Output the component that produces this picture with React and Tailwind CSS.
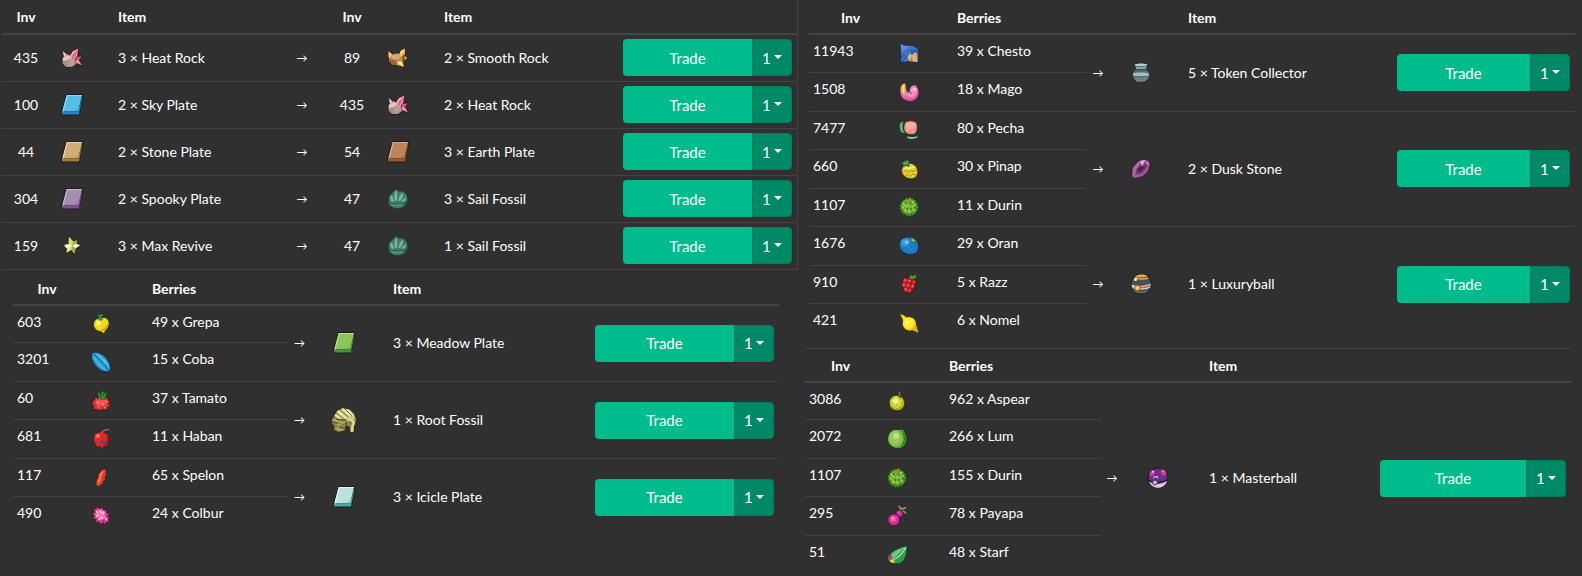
import clsx from 'clsx';

// Points of a spiky round fruit, centred in the 30x30 sprite box
const burr = (count, outer, inner) =>
    Array.from({ length: count * 2 }, (_, i) => {
        const r = i % 2 ? inner : outer;
        const a = (i * Math.PI) / count;
        return `${(15 + r * Math.cos(a)).toFixed(1)},${(15 + r * Math.sin(a)).toFixed(1)}`;
    }).join(' ');

const Plate = ({ face, light, edge }) => (
    <>
        <path d="M9 4H26V8L22.5 25.5H4V21Z" fill="#1d1d1d" />
        <path d="M9.7 5H25L21.2 21.5H5.3Z" fill={face} />
        <path d="M5.3 21.5L9.7 5H25L24.8 6H10.6L6.6 21.5Z" fill={light} />
        <path d="M5 22H21.2L25 6V9L22 24.6H5Z" fill={edge} />
        <path d="M17.5 20.5L20.5 18.5L20 20.5Z" fill={edge} opacity="0.6" />
    </>
);

const SPRITES = {
    heatRock: (
        <g strokeLinejoin="round">
            <path d="M6 7L12 12L17 7L21.5 5V12L25 13L23 17L25.5 22.5L20 22L16 24.5H9L5 21V14L7 12Z" fill="#3a2c2c" stroke="#252222" />
            <path d="M5.5 15L10 11L18 14L19 21L15 24H9L5.5 20.5Z" fill="#a88d84" />
            <path d="M6 15L10 12L15 14L11 17L6 18Z" fill="#dccbbe" />
            <path d="M11 18L17 15L18 20L15 23H11Z" fill="#b7a093" />
            <path d="M6 8L11 12.5L7 14Z" fill="#ee7a9c" />
            <path d="M6 8L9 12L7 14Z" fill="#f6c7d1" />
            <path d="M21.3 5.5L15.5 8.5L12.5 14L15 17L20 13Z" fill="#f5b3c1" />
            <path d="M21.3 5.5L19 12L15 17L14.5 13Z" fill="#e0648b" />
            <path d="M19 14L24.5 13.5L22 17L25 22L18.5 20Z" fill="#db527f" />
            <path d="M20 17L24.5 22L19 19Z" fill="#f7b5c5" />
        </g>
    ),
    smoothRock: (
        <g strokeLinejoin="round">
            <path d="M5.5 7.5L10 10.5L16 9L20 5.5L22.5 5V12L25 15L21.5 18L21.5 24.5L15 23L9 22.5L5.5 18.5Z" fill="#6b4832" stroke="#252220" />
            <path d="M6 14L11 10.5L19 11L20 17L15 22H10L6 18Z" fill="#b07a56" />
            <path d="M9 12L15 11L18 14L14 17L8 16Z" fill="#d6a486" />
            <path d="M7 16L14 18L14 22H10L6.5 18.5Z" fill="#946446" />
            <path d="M15 17L19 15L18 20L15 21Z" fill="#c28b6a" />
            <path d="M5.5 8L9 11.5L6.5 15.5L5.5 14Z" fill="#f5d65c" />
            <path d="M22 5.5L18 7.5L16 12L18.5 14L22 10.5Z" fill="#f2bd30" />
            <path d="M21.5 6L17.5 9L17 12Z" fill="#fff3b5" />
            <path d="M21.5 13L24.5 15L21.5 17Z" fill="#eab022" />
            <path d="M13.5 18.5L19 17.5L21 24L14.5 22Z" fill="#f0b829" />
            <path d="M14 19L18 19L20.5 23.5Z" fill="#fff3b5" />
        </g>
    ),
    skyPlate: <Plate face="#56bfe9" light="#8bdcf7" edge="#1f86c4" />,
    stonePlate: <Plate face="#d0ae73" light="#ecd6a4" edge="#a67b3e" />,
    spookyPlate: <Plate face="#a48db0" light="#cbb9d4" edge="#8a4c98" />,
    earthPlate: <Plate face="#bd8558" light="#dcae83" edge="#a2592b" />,
    meadowPlate: <Plate face="#8bc45c" light="#b9e58c" edge="#3f9a38" />,
    iciclePlate: <Plate face="#bbe2df" light="#e4f7f4" edge="#35b3a6" />,
    maxRevive: (
        <g strokeLinejoin="round">
            <path d="M12 5L16.5 10L20 8.5L19.5 12.5L23.5 14.5L19 17.5L17.5 24L14 19.5L9 22.5L9.5 17.5L6.5 14L11.5 12.5Z" fill="#c5c85c" stroke="#23231a" strokeWidth="1.2" />
            <path d="M12 5.5L16 10.5L15 15L11.5 12.5Z" fill="#dbe070" />
            <path d="M7 14L11.5 13L15 15L9.5 17.5Z" fill="#fffff0" />
            <path d="M15 15L19.5 12.5L23 14.5L19 17Z" fill="#fffff0" />
            <path d="M15 15L14 19L9.5 22L10 17.5Z" fill="#e3e68e" />
            <path d="M15 15L19 17L17.5 23L14.5 19Z" fill="#a3a743" />
            <path d="M16 11L20 9L19.5 12.5L15 15Z" fill="#b0b44a" />
        </g>
    ),
    sailFossil: (
        <g strokeLinejoin="round" strokeLinecap="round">
            <path d="M13 5L15.5 7L20 7L24 11L25 16L22 22L16 24.8L10 24L5.5 19.5L5.5 13L9 9Z" fill="#417d6b" stroke="#213a35" strokeWidth="0.9" />
            <path d="M20 22L24.5 15L25 18L22 22.5L17 24.5Z" fill="#2a4c55" />
            <path d="M9 18C7 16 7 13 8.5 11C10 13 10.5 15 10.5 18ZM11.5 17C11 13 11.5 9 13.5 6C14.5 9 14.5 13 13.5 17ZM15.5 17C15.5 13 17 10.5 20 9C20 13 19 15 17 17ZM18.5 17.5C19.5 15.5 21 14 23 13.5C23 15.5 22.5 16.5 21 18Z" fill="#6fae96" />
            <path d="M8.5 13L9.5 17M13 9V16M19.5 10.5L16.5 16" stroke="#95c8ae" strokeWidth="0.7" fill="none" />
            <path d="M6.5 18.5C10 20 18 20 23 18" stroke="#2d5f51" strokeWidth="0.9" fill="none" />
            <path d="M8 21.5H13M15 21.5H20" stroke="#5a9c86" strokeWidth="1.2" />
        </g>
    ),
    grepa: (
        <g>
            <path d="M15.5 9C20 7 24 11 23 16C22.5 19 20 21 19 22.5L18.5 25L14.5 22.5C10 22 7.3 19 7.5 15C7.8 11 11 8.5 15.5 9Z" fill="#f2d81f" stroke="#2c2810" strokeWidth="0.8" />
            <path d="M22.5 13C22.5 17 20.5 20.5 18.5 22L13 21.5C17.5 20.5 21 17.5 22.5 13Z" fill="#cdaa10" />
            <circle cx="12.5" cy="14" r="2.5" fill="#fff07a" />
            <path d="M12.5 5.5L14 8L16.5 5.5M12 10L14 10.5L17 10M14.5 7.5V12" stroke="#35953c" strokeWidth="1.7" fill="none" />
        </g>
    ),
    coba: (
        <g transform="rotate(47 15 15)">
            <path d="M2.5 15C5 6.5 25 6.5 27.5 15C25 23.5 5 23.5 2.5 15Z" fill="#2ba3d8" stroke="#12303f" strokeWidth="0.9" />
            <path d="M5 14C9 10 21 10 25 14C20 12.8 10 12.8 5 14Z" fill="#5fc2ea" />
            <path d="M4 15C10 14 20 14 26 15" stroke="#14709f" strokeWidth="1.2" fill="none" />
            <path d="M7 17C11 18.5 19 18.5 23 17" stroke="#5bbde6" strokeWidth="1" fill="none" />
            <path d="M8 19.5C12 21 18 21 22 19.5" stroke="#1b7db0" strokeWidth="1" fill="none" />
        </g>
    ),
    tamato: (
        <g>
            <path d="M6.5 14.5L8.5 14L8 11L11.5 12C14 10.5 17 10.5 19.5 11.5L22 10.5L22 14L24.5 15L23 17.5L24.3 21L21.5 21.5L20.5 24.5L17 23.5L13 24.8L10.5 23.5L7 23.5L7.5 20L6 18Z" fill="#d93337" stroke="#351414" strokeWidth="0.8" />
            <path d="M10 14C13 12.5 19 12.5 21 15C21.5 18 19 20.5 15 20.5C11 20.5 8.5 17.5 10 14Z" fill="#ee5350" />
            <path d="M11 16.5h1.5M16 18h1.5M19.5 15.5h1M12 21h1M18.5 21.5h1" stroke="#ffb1a2" strokeWidth="1.3" />
            <path d="M12.5 6.5L14.5 13M16.5 5.5V14M20 6.5L17.5 13" stroke="#1d5d24" strokeWidth="2.6" fill="none" />
            <path d="M12.5 7L14.5 12.5M16.5 6V13.5M19.8 7L17.5 12.5" stroke="#379a3e" strokeWidth="1.3" fill="none" />
        </g>
    ),
    haban: (
        <g>
            <path d="M11.5 8.5C14 7.5 18 7.5 20.5 9.5C23.5 12 23.5 17 22 19.5L20.5 23L18 22.5L16.5 25L14 22.8L10.5 23L9.5 20.5C6.5 17.5 6.5 11 11.5 8.5Z" fill="#d92a2b" stroke="#331212" strokeWidth="0.8" />
            <path d="M21 11C23 14 22 19 19 21.5L16 22.5C19 19.5 21 16 21 11Z" fill="#ae1d24" />
            <ellipse cx="11.8" cy="12" rx="2.6" ry="2.2" fill="#f46a5c" />
            <path d="M15.5 9C17 6.5 19.5 5.5 23 5.5" stroke="#cf7a6c" strokeWidth="1.2" fill="none" />
            <path d="M13.5 18.5L16.5 16L19.5 18L17 20Z" fill="#55468f" />
        </g>
    ),
    spelon: (
        <g>
            <path d="M16 6L19.5 6L20.8 8L20 10L20.6 12.5L19 14L19.5 17L17.5 18L17 21.5L14.5 22L13.5 24.5L11.5 23L9.5 22L10.3 19L9.8 16.5L11.8 15.5L12 12L12 10L14 9.5Z" fill="#e0462f" stroke="#341410" strokeWidth="0.8" />
            <path d="M16.5 8.5C14.8 11 14 15 12.5 20" stroke="#fb7d58" strokeWidth="1.8" fill="none" />
            <path d="M18.5 10C18 14 17 17 15 21" stroke="#c4341f" strokeWidth="1" fill="none" />
        </g>
    ),
    colbur: (
        <g>
            <path d="M6.5 7.5L10 8L11 5.5L13.5 7.5L17 6L17.5 9L21 8.5L20.5 11.5L23.5 13L21.5 15L24 17.5L22 18.5L24.3 21.5L20.5 21L19.5 24L17 21.5L14.5 23.5L13 21L9.5 21.5L10 18.5L6.5 17.5L8.5 15L5.8 12.5L9 11Z" fill="#d8408f" stroke="#3a1129" strokeWidth="0.8" />
            <ellipse cx="14.5" cy="14" rx="5" ry="5" fill="#ee78b5" />
            <path d="M10 10l2 2M14 9l1 3M18 11l-2 2M10 15l3-1M15 16l2 2M19 17l2 2M13 19l1-2" stroke="#ffd3ea" strokeWidth="1.2" />
            <path d="M19 14l2 0M17 19l1 2M11 18l1-1" stroke="#b02878" strokeWidth="1.1" />
        </g>
    ),
    rootFossil: (
        <g strokeLinecap="round" strokeLinejoin="round">
            <path d="M5 10L8 5L14 2.5L21 4L25.5 9L28 14L27 18L25.5 21L25.5 27L21 28L20 22L17 21L16 26L9 27.5L4 25L5 21L2 18L3 14Z" fill="#8b8449" stroke="#28250f" />
            <path d="M6 11L9 6L14 3.5L21 5L25 10L26 14L19 15L8 13Z" fill="#cfc883" />
            <path d="M9 6.5L17 12.5M13.5 4L21 10.5M18 4.5L24 10M6.5 10L12 13.5" stroke="#efeab2" strokeWidth="1.6" />
            <path d="M7.5 8.5L14 13.5M11 5L19 12M16 4L22.5 10.5" stroke="#57511f" strokeWidth="0.8" />
            <path d="M4 15L9 16L14 18L18 16M6 18L11 20L8 24L13 25" stroke="#b0a862" strokeWidth="1.8" fill="none" />
            <path d="M19 14.5C24 14.5 26 17 23.5 21L23 26" stroke="#ded795" strokeWidth="2.6" fill="none" />
            <path d="M3.5 17L8 18.5M10 22L14 23M17 17V20M8 14.5L17 15" stroke="#4c4720" strokeWidth="1.2" />
        </g>
    ),
    chesto: (
        <g strokeLinejoin="round">
            <path d="M6 5L10 7L19 7.5L24.3 11L24 24.8L15 23.5L7 24.8L6.5 17Z" fill="#4176c4" stroke="#18233a" strokeWidth="0.8" />
            <path d="M6.8 6L10 8L16 8L8 14Z" fill="#5f8fd8" />
            <path d="M7 17.5C11 17 14 14.5 16 12L24 11.5L23 14C18 14.5 13 18 9 23.5L7.5 24Z" fill="#2b5aa5" />
            <path d="M7.5 22C10 18 13 15.5 17 14" stroke="#6b9ae0" strokeWidth="1" fill="none" />
            <path d="M13.5 18L16.5 15.5L18 17.5L21 14.5L23.5 16V24L15 23Z" fill="#dcb67c" />
            <path d="M18 17.5L18.5 23.5L16 23ZM22 15.5L23.5 16V24Z" fill="#b0844c" />
        </g>
    ),
    mago: (
        <g>
            <path d="M7 9C7.5 7 9 6 11.5 6L13 12L18 8L21 8L22 6L22.5 9C25.5 12 25.5 17 23.5 20.5C21 24.5 16 25.5 11.5 23.5C6 21 4.5 14 7 9Z" fill="#e36bac" stroke="#391428" strokeWidth="0.8" />
            <path d="M15.5 15.5C14.5 11 17 8.5 20 9C24 10.5 24 16 21 19C17 21.5 13 19.5 11 16.5Z" fill="#f08fc2" />
            <path d="M7 9.5C8 7.5 9.5 6.5 11.2 6.5L11.5 13L11 18.5C7.5 17.5 6 13 7 9.5Z" fill="#dcbf4c" />
            <path d="M9.5 8L9.5 15" stroke="#fbe9a0" strokeWidth="1.1" />
            <path d="M12 6C11.8 12 12 15 15.5 15.5C16 11.5 16.5 9.5 19 8L16 7.5Z" fill="#303030" />
            <path d="M15.5 15.5C16 16.5 17 16.5 18 16" stroke="#8f2c66" strokeWidth="1" fill="none" />
            <ellipse cx="20.5" cy="12.5" rx="1.7" ry="1.4" fill="#fbc9e2" />
            <path d="M11 22C16 24.5 21 23 23.5 18" stroke="#c54a90" strokeWidth="1.3" fill="none" />
        </g>
    ),
    pecha: (
        <g>
            <path d="M6 7L10.5 6C8.5 10 9 15 11.5 19L8 18.5C4.5 15.5 4.5 10 6 7Z" fill="#3b9a5b" stroke="#17321f" strokeWidth="0.8" />
            <path d="M7.5 8C6.5 11 7 14 8.5 17" stroke="#8fd3a0" fill="none" />
            <path d="M13 20.5C17 22.5 22 21.5 25 20.5C23.5 24.5 16 25.5 12.5 23Z" fill="#57b374" stroke="#17321f" strokeWidth="0.8" />
            <path d="M14.5 22.5C17 23.5 20.5 23 23 22" stroke="#b5e3bb" fill="none" />
            <path d="M12 6.5C15 5.5 20 5.5 22.5 7.5C24 11 23.5 15 22 18C19 20.5 13.5 20 11 17C9 14 9.5 9 12 6.5Z" fill="#ef8f87" stroke="#3f2020" strokeWidth="0.8" />
            <path d="M12.5 8C15 7 19 7 21.5 8.5L21.5 13C18 15 14 15 11.5 13Z" fill="#f6aba0" />
            <path d="M13.5 10.5h1M18.5 10.5h1M16 13h1M13 15.5h1M18.5 16h1" stroke="#ffe6e0" strokeWidth="1.1" />
        </g>
    ),
    pinap: (
        <g>
            <path d="M12 10C16 8 21 10 23 14C25 19 23 24 18 24.8C12 25 7.5 21 7.5 16.5C8 13 9.5 11 12 10Z" fill="#e3cf36" stroke="#332c0e" strokeWidth="0.8" />
            <path d="M9 18L12 16.5L14 18.5L16.5 16L19 18L21 15.5L23 16.5M11 22L13.5 20.5L16 22.5L19 20L22 21" stroke="#ab9314" strokeWidth="1" fill="none" />
            <path d="M10.5 15L13 13.5L15.5 15L18 13L20.5 14" stroke="#fff38b" strokeWidth="1.2" fill="none" />
            <path d="M6 8L10 8L9.5 5.5L12 7L13.5 4.5L14.5 7.5L16.5 8L14.5 10L15 12L11.5 11.5L8 13L9 10.5Z" fill="#3f9148" stroke="#1b3519" strokeWidth="0.8" />
            <path d="M9.5 9L12 10M13 7V9.5" stroke="#85c77c" />
        </g>
    ),
    durin: (
        <g>
            <polygon points={burr(17, 10.4, 8.6)} fill="#4c8f2a" stroke="#1e2a14" strokeWidth="0.7" />
            <circle cx="14.5" cy="14.5" r="7" fill="#6db035" />
            <path d="M9 11l2 2M8 15l2 1M11 17l1 3M15 18l0 3M19 17l2 2M20 13l2 0M18 11l2-2M14.5 13l1 2M11 13.5l2 1M18 14l1 1" stroke="#b6de62" strokeWidth="1.1" />
            <path d="M11 10l1 2M22 15l-2 1M9 18l-1 1M13 16l0 2M17 16l0 2M16 12l1-2M13 21l-1 2M17 22l1 1" stroke="#346d1e" strokeWidth="1.1" />
            <path d="M15 6.5L17.5 5.5L16.5 10.5L15 9.5Z" fill="#c97b3c" />
        </g>
    ),
    oran: (
        <g>
            <path d="M8.5 7.5C12 5 19 5.5 22.5 9.5C26 14 25 20 21 22.5C16 25 9 22.5 6.5 18C4.5 14 5 10 8.5 7.5Z" fill="#1f80ca" stroke="#10243a" strokeWidth="0.8" />
            <path d="M7.5 10C9 7.5 14 7 16 9C16.5 12 14 14.5 11 15C8.5 15 6.5 12.5 7.5 10Z" fill="#3f99da" />
            <circle cx="12.5" cy="11.2" r="1.8" fill="#7cc2ee" />
            <path d="M15.5 6.5L19 7L22.5 9.5L21.5 12L18.5 11.5L16.5 9.5Z" fill="#4ea24a" stroke="#18405e" strokeWidth="0.6" />
            <path d="M18 8.5l2 1.5" stroke="#bde5a8" />
            <path d="M9 17.5h1M13 19.5h1M17 16h1M20 19h1M21.5 15h1M16.5 21.5h1" stroke="#125693" strokeWidth="1.1" />
        </g>
    ),
    razz: (
        <g>
            <path d="M9 8.5L14 8L20 9L22.5 12L21.5 18L18.5 22L14 25L10.5 23L9.5 19.5L7.5 16L8 12Z" fill="#961b22" stroke="#301012" strokeWidth="0.8" />
            <g fill="#df3037">
                <circle cx="11" cy="11.5" r="2" />
                <circle cx="15.5" cy="12" r="2" />
                <circle cx="20" cy="13" r="1.8" />
                <circle cx="9.8" cy="16" r="1.9" />
                <circle cx="14" cy="16.5" r="2" />
                <circle cx="18.5" cy="17.5" r="1.9" />
                <circle cx="11.5" cy="20.5" r="1.9" />
                <circle cx="15.5" cy="21.5" r="1.9" />
            </g>
            <path d="M10.5 11h1M15 11.5h1M9.5 15.5h1M13.5 16h1M18 17h1M11 20h1" stroke="#ffaca0" />
            <path d="M14.5 8.5L17.5 5.5L18.5 7L22.5 5L22 9.5L17.5 10.5Z" fill="#4f9b35" stroke="#1c3315" strokeWidth="0.7" />
        </g>
    ),
    nomel: (
        <g strokeLinejoin="round">
            <path d="M5.5 5.5L10 7L12.5 9C18 7.5 22.5 11 22.5 17L24.8 25L18.5 22.5C13 24 8 20.5 8.2 15L8.5 12Z" fill="#f6d822" stroke="#302a10" strokeWidth="0.8" />
            <path d="M21.5 14C21.5 18.5 19 21.5 14 22.5L19 22L24 24.5L22 17Z" fill="#e3ab1a" />
            <circle cx="14.5" cy="15" r="5" fill="#ffee38" />
            <circle cx="12.8" cy="14.5" r="1.6" fill="#fffbc8" />
        </g>
    ),
    tokenCollector: (
        <g>
            <path d="M8 6.5C11 4.5 19 4.5 22 6.5L20.5 11L23.8 15C24.5 20 20 24.8 15 24.8C10 24.8 5.5 20 6.2 15L9.5 11Z" fill="#557072" stroke="#1d2627" strokeWidth="0.9" />
            <ellipse cx="15" cy="6.8" rx="6.5" ry="1.3" fill="#b9cfcc" />
            <path d="M10 10H20" stroke="#9fb8b6" strokeWidth="1.5" />
            <path d="M9 11.8H21" stroke="#2e4041" />
            <path d="M7 15.5C10 14 20 14 23 15.5L22.5 18H7.5Z" fill="#a9bcbb" />
            <path d="M8 20.5H22M10 22.5H20" stroke="#8097a0" strokeWidth="1.4" strokeDasharray="1.5 1" />
        </g>
    ),
    duskStone: (
        <g strokeLinejoin="round">
            <path d="M12 7L18 5L22.5 6.5L24.3 11L22.5 17L17 22.5L9 24.8L5.7 23L6 14Z" fill="#9a559a" stroke="#211322" strokeWidth="0.9" />
            <path d="M7 14.5L12.5 8L14.5 11L9.5 16L8 23L6.5 22Z" fill="#b06aa9" />
            <path d="M14 10.5L20 9.5L21 13L16 19L10 20.5L10.5 15.5Z" fill="#67375f" />
            <path d="M12 14L17 12L18 14L14 17.5H11.5Z" fill="#4b2549" />
            <path d="M13.5 7L19 6L16.5 12.5Z" fill="#e2a8dc" />
            <path d="M20 6.5L22.5 8L23.5 11.5L21 10Z" fill="#c585bf" />
        </g>
    ),
    luxuryBall: (
        <g>
            <circle cx="15" cy="15" r="10" fill="#4b4e56" stroke="#1c1c1e" />
            <path d="M10 7C13 5.2 18 5 21 7L22.5 10C18 11 13 11 8.5 9.5Z" fill="#e2ab4c" />
            <path d="M11 8.3C14 9 18 9 22 8" stroke="#9c4a30" strokeWidth="1.1" fill="none" />
            <path d="M5.3 15.5C9 17.5 20 17.5 24.8 14.5L24 19C18 21 10 21.5 6.5 19Z" fill="#ded6cc" />
            <path d="M13 18.8C18 19 21.5 18 24.5 16.8" stroke="#d2583a" strokeWidth="1.6" fill="none" />
            <path d="M8 21.5C12 24.5 18 24.5 22 21" stroke="#6d7079" strokeWidth="1.2" fill="none" />
            <circle cx="11.5" cy="19" r="2.9" fill="#e3b03e" stroke="#6b4d18" strokeWidth="0.7" />
            <circle cx="11.5" cy="19" r="1.1" fill="#fff6cf" />
            <circle cx="9.5" cy="10.5" r="1.5" fill="#f2f3f6" />
        </g>
    ),
    aspear: (
        <g>
            <circle cx="15" cy="17" r="7.8" fill="#b9b31d" stroke="#2b2c10" strokeWidth="0.8" />
            <circle cx="14.3" cy="16" r="6" fill="#d5d93c" />
            <circle cx="13.5" cy="15" r="2.8" fill="#f0f291" />
            <path d="M10.5 13h1M17.5 13.5h1M9.5 17.5h1M14 19h1M19 17h1M11.5 20.5h1M17 20.5h1M14.5 22.5h1" stroke="#7fa324" strokeWidth="1.2" />
            <path d="M16.5 5L18.5 5.5L18.5 11.5L17 11.5Z" fill="#a98648" stroke="#33280f" strokeWidth="0.6" />
        </g>
    ),
    lum: (
        <g>
            <path d="M16 5.5L21 5L22.5 8C26 13 25 20 21 23C16 26.5 8.5 24 6 18C4.5 12 8 5.5 16 5.5Z" fill="#4da33a" stroke="#173016" strokeWidth="0.8" />
            <ellipse cx="13.8" cy="14.5" rx="7.5" ry="8.5" fill="#84c14a" />
            <ellipse cx="13" cy="13.5" rx="5.5" ry="6.5" fill="#97cc5b" />
            <ellipse cx="14" cy="12" rx="2.8" ry="3" fill="#bfe093" />
            <path d="M21 9C23.5 13 23 18 19.5 22" stroke="#24752b" strokeWidth="1.1" fill="none" />
        </g>
    ),
    payapa: (
        <g>
            <path d="M17.5 9.5L18.5 7L20.5 8L24 6.5M19.5 9.5L22 10.5L24 12.5M18.5 7L16.5 5" stroke="#7cae67" strokeWidth="1.4" fill="none" />
            <circle cx="17.5" cy="12.5" r="3.8" fill="#c4278a" stroke="#33102a" strokeWidth="0.8" />
            <circle cx="11.8" cy="18.8" r="6" fill="#cf2c8f" stroke="#33102a" strokeWidth="0.8" />
            <circle cx="11.3" cy="18" r="3.2" fill="#e453a6" />
            <circle cx="10.8" cy="17.2" r="1.3" fill="#f7a8d5" />
            <circle cx="17" cy="12" r="1.4" fill="#dd4ea3" />
        </g>
    ),
    starf: (
        <g>
            <path d="M25 5.5C25.5 14 23 22.5 16.5 24L11 23.5L7 22L6 17C8 11 16 8 25 5.5Z" fill="#2f9b4d" stroke="#142c1b" strokeWidth="0.8" />
            <path d="M24 7C16 9 10.5 11.5 8.5 16.5L11 19Z" fill="#72c58a" />
            <path d="M24 7.5C21 13 17 17.5 10.5 20" stroke="#b9eac4" strokeWidth="1.2" fill="none" />
            <path d="M6 16L9 14L10.5 18L8 19.5Z" fill="#c63b37" />
            <path d="M5.5 16L7.5 18.5L6.5 20.5Z" fill="#3975bc" />
            <path d="M7.5 20L12 19.5L12.5 23L9 22.5Z" fill="#e9d057" />
        </g>
    ),
    masterBall: (
        <g>
            <circle cx="15" cy="15" r="10" fill="#6c2d90" stroke="#1c1220" />
            <path d="M6 18.5C11 22 19 21.5 24.3 17.5C22.5 23 18.5 24.8 15 24.8C11 24.8 7.5 22.5 6 18.5Z" fill="#d4cbe2" />
            <path d="M5.3 17C11 21 19 20.5 24.7 16.5" stroke="#231629" strokeWidth="1.4" fill="none" />
            <ellipse cx="9.2" cy="10" rx="2.3" ry="3.2" transform="rotate(30 9.2 10)" fill="#dc3a96" />
            <ellipse cx="20.5" cy="9.5" rx="2.3" ry="3.2" transform="rotate(-30 20.5 9.5)" fill="#dc3a96" />
            <circle cx="9.8" cy="8.8" r="1" fill="#ffd3ec" />
            <circle cx="20" cy="8.3" r="0.8" fill="#f3a3cf" />
            <path d="M10.5 15.5L11.5 13L12.7 14.8L14 13L15 15.5" stroke="#d9c8e6" strokeWidth="1" fill="none" />
            <circle cx="12" cy="19.5" r="2.4" fill="#e8e4ec" stroke="#2a2030" strokeWidth="0.9" />
            <circle cx="12" cy="19.5" r="1" fill="#8c8794" />
        </g>
    ),
};

const Sprite = ({ name }) => (
    <svg viewBox="0 0 30 30" className="mx-auto block size-[30px]" aria-hidden="true">
        {SPRITES[name]}
    </svg>
);

const TradeButton = ({ item }) => (
    <div className="flex h-[37px] text-[15px] text-white">
        <button type="button" className="flex-1 cursor-pointer rounded-l bg-[#00bc8c] hover:bg-[#00a379]">
            Trade
        </button>
        <div className="relative w-10">
            <select
                aria-label={`Trades for ${item}`}
                className="h-full w-full cursor-pointer appearance-none rounded-r border border-[#007c5d] bg-[#008966] pl-[9px] text-white"
                defaultValue="1"
            >
                <option>1</option>
            </select>
            <svg viewBox="0 0 8 4" className="pointer-events-none absolute top-4 left-[22px] h-1 w-2" aria-hidden="true">
                <path d="M0 0H8L4 4Z" fill="#fff" />
            </svg>
        </div>
    </div>
);

const ITEM_TRADES = [
    { inv: 435, icon: 'heatRock', give: '3 × Heat Rock', inv2: 89, icon2: 'smoothRock', get: '2 × Smooth Rock' },
    { inv: 100, icon: 'skyPlate', give: '2 × Sky Plate', inv2: 435, icon2: 'heatRock', get: '2 × Heat Rock' },
    { inv: 44, icon: 'stonePlate', give: '2 × Stone Plate', inv2: 54, icon2: 'earthPlate', get: '3 × Earth Plate' },
    { inv: 304, icon: 'spookyPlate', give: '2 × Spooky Plate', inv2: 47, icon2: 'sailFossil', get: '3 × Sail Fossil' },
    { inv: 159, icon: 'maxRevive', give: '3 × Max Revive', inv2: 47, icon2: 'sailFossil', get: '1 × Sail Fossil' },
];

const PLATE_TRADES = [
    {
        berries: [[603, 'grepa', '49 x Grepa'], [3201, 'coba', '15 x Coba']],
        icon: 'meadowPlate',
        item: '3 × Meadow Plate',
    },
    {
        berries: [[60, 'tamato', '37 x Tamato'], [681, 'haban', '11 x Haban']],
        icon: 'rootFossil',
        item: '1 × Root Fossil',
    },
    {
        berries: [[117, 'spelon', '65 x Spelon'], [490, 'colbur', '24 x Colbur']],
        icon: 'iciclePlate',
        item: '3 × Icicle Plate',
    },
];

const STONE_TRADES = [
    {
        berries: [[11943, 'chesto', '39 x Chesto'], [1508, 'mago', '18 x Mago']],
        icon: 'tokenCollector',
        item: '5 × Token Collector',
    },
    {
        berries: [[7477, 'pecha', '80 x Pecha'], [660, 'pinap', '30 x Pinap'], [1107, 'durin', '11 x Durin']],
        icon: 'duskStone',
        item: '2 × Dusk Stone',
    },
    {
        berries: [[1676, 'oran', '29 x Oran'], [910, 'razz', '5 x Razz'], [421, 'nomel', '6 x Nomel']],
        icon: 'luxuryBall',
        item: '1 × Luxuryball',
    },
];

const BALL_TRADES = [
    {
        berries: [
            [3086, 'aspear', '962 x Aspear'],
            [2072, 'lum', '266 x Lum'],
            [1107, 'durin', '155 x Durin'],
            [295, 'payapa', '78 x Payapa'],
            [51, 'starf', '48 x Starf'],
        ],
        icon: 'masterBall',
        item: '1 × Masterball',
    },
];

const ItemTable = () => (
    <table className="w-full table-fixed">
        <colgroup>
            <col className="w-12" />
            <col className="w-11" />
            <col className="w-[182px]" />
            <col className="w-[52px]" />
            <col className="w-12" />
            <col className="w-11" />
            <col />
            <col className="w-[179px]" />
        </colgroup>
        <thead>
            <tr className="h-[34px] border-b-2 border-[#444] align-bottom">
                <th className="pb-[5px]">Inv</th>
                <th></th>
                <th className="pb-[5px] pl-6 text-left">Item</th>
                <th></th>
                <th className="pb-[5px]">Inv</th>
                <th></th>
                <th className="pb-[5px] pl-6 text-left">Item</th>
                <th></th>
            </tr>
        </thead>
        <tbody>
            {ITEM_TRADES.map((t) => (
                <tr key={t.give} className="h-[47px] border-b border-[#444]">
                    <td className="text-center">{t.inv}</td>
                    <td><Sprite name={t.icon} /></td>
                    <td className="pl-6">{t.give}</td>
                    <td className="text-center text-[11px]">→</td>
                    <td className="text-center">{t.inv2}</td>
                    <td><Sprite name={t.icon2} /></td>
                    <td className="pl-6">{t.get}</td>
                    <td className="px-[5px]"><TradeButton item={t.get} /></td>
                </tr>
            ))}
        </tbody>
    </table>
);

// cols: widths of the seven columns, the item column takes what is left
const BerryTable = ({ trades, cols, headClass }) => (
    <table className="w-full table-fixed">
        <colgroup>
            {cols.map((c, i) => <col key={i} className={c} />)}
        </colgroup>
        <thead>
            <tr className={clsx('border-b-2 border-[#444] align-bottom', headClass)}>
                <th className="pb-1">Inv</th>
                <th></th>
                <th className="pb-1 pl-[31px] text-left">Berries</th>
                <th></th>
                <th></th>
                <th className="pb-1 pl-4 text-left">Item</th>
                <th></th>
            </tr>
        </thead>
        <tbody>
            {trades.map((t, g) =>
                t.berries.map(([inv, icon, label], i) => {
                    const last = g === trades.length - 1;
                    const line = last && i === t.berries.length - 1 ? '' : 'border-b border-[#444]';
                    const span = last ? '' : 'border-b border-[#444]';
                    return (
                        <tr key={icon} className="odd:h-[38px] even:h-[39px]">
                            <td className={clsx('pt-[5px] pl-1 align-top', line)}>{inv}</td>
                            <td className={line}><Sprite name={icon} /></td>
                            <td className={clsx('pt-[5px] pl-[31px] align-top', line)}>{label}</td>
                            {i === 0 && (
                                <>
                                    <td rowSpan={t.berries.length} className={clsx('text-center text-[11px]', span)}>→</td>
                                    <td rowSpan={t.berries.length} className={span}><Sprite name={t.icon} /></td>
                                    <td rowSpan={t.berries.length} className={clsx('pl-4', span)}>{t.item}</td>
                                    <td rowSpan={t.berries.length} className={clsx('px-[5px]', span)}>
                                        <TradeButton item={t.item} />
                                    </td>
                                </>
                            )}
                        </tr>
                    );
                })
            )}
        </tbody>
    </table>
);

export default function App() {
    return (
        <main className="grid min-h-screen grid-cols-[798fr_784fr] items-start bg-[#303030] font-['Lato',sans-serif] text-sm leading-[22px] text-white">
            <div>
                <section className="border-r border-[#444] pl-0.5">
                    <ItemTable />
                </section>
                <section className="pr-[19px] pl-[13px]">
                    <BerryTable
                        trades={PLATE_TRADES}
                        headClass="h-[35px]"
                        cols={['w-[68px]', 'w-10', 'w-[167px]', 'w-[23px]', 'w-[66px]', '', 'w-[189px]']}
                    />
                </section>
            </div>
            <div>
                <section className="pr-[7px] pl-[11px]">
                    <BerryTable
                        trades={STONE_TRADES}
                        headClass="h-[34px]"
                        cols={['w-[83px]', 'w-[34px]', 'w-[160px]', 'w-6', 'w-[62px]', '', 'w-[183px]']}
                    />
                </section>
                <section className="mt-[6px] pr-[11px] pl-[7px]">
                    <BerryTable
                        trades={BALL_TRADES}
                        headClass="h-[33px] border-t"
                        cols={['w-[71px]', 'w-[42px]', 'w-[183px]', 'w-[22px]', 'w-[70px]', '', 'w-[196px]']}
                    />
                </section>
            </div>
        </main>
    );
}
